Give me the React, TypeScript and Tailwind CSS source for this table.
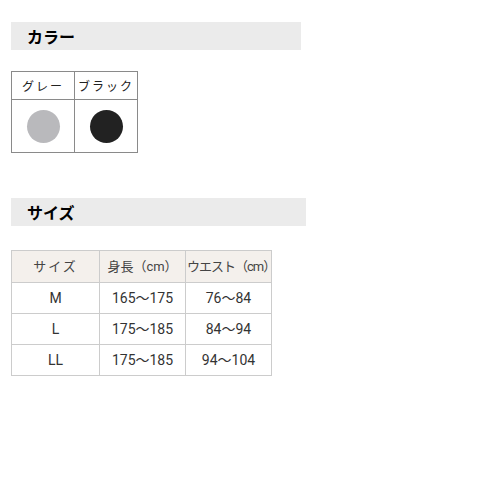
import React from 'react';

const font = { fontFamily: '"Noto Sans CJK JP", "Noto Sans", sans-serif' };

const sizes = [
  { size: 'M', height: '165〜175', waist: '76〜84' },
  { size: 'L', height: '175〜185', waist: '84〜94' },
  { size: 'LL', height: '175〜185', waist: '94〜104' },
];

const SectionTitle = ({ title, width }: { title: string; width: string }) => (
  <div className={`${width} h-[28px] bg-[#ebebeb] flex items-center pl-[16px]`}>
    <h2 className="text-[16px] font-bold text-black leading-none">{title}</h2>
  </div>
);

export default function App() {
  return (
    <div className="w-[500px] h-[500px] bg-white pl-[11px] pt-[22px]" style={font}>
      <SectionTitle title="カラー" width="w-[290px]" />

      {/* colour swatches */}
      <table className="mt-[21px] border-collapse text-[12px] text-[#222]">
        <tbody>
          <tr className="h-[28px]">
            <td className="w-[63px] border border-[#8a8a8a] text-center tracking-[2px]">グレー</td>
            <td className="w-[63px] border border-[#8a8a8a] text-center tracking-[2px]">ブラック</td>
          </tr>
          <tr className="h-[53px]">
            <td className="border border-[#8a8a8a]">
              <div className="mx-auto w-[33px] h-[33px] rounded-full bg-[#b9b9bc]" />
            </td>
            <td className="border border-[#8a8a8a]">
              <div className="mx-auto w-[33px] h-[33px] rounded-full bg-[#222222]" />
            </td>
          </tr>
        </tbody>
      </table>

      <div className="mt-[45px]">
        <SectionTitle title="サイズ" width="w-[295px]" />
      </div>

      {/* size chart */}
      <table
        className="mt-[24px] w-[261px] table-fixed border-collapse text-[14px] text-[#333] leading-none"
        style={{ fontFamily: 'Roboto, "Noto Sans CJK JP", sans-serif' }}
      >
        <thead>
          <tr className="h-[32px] bg-[#f4f0ec] text-[#444] text-[13px]">
            <th className="w-[88px] border border-[#cccccc] font-normal tracking-[2px]">サイズ</th>
            <th className="w-[86px] border border-[#cccccc] font-normal whitespace-nowrap">身長（cm）</th>
            <th className="w-[86px] border border-[#cccccc] font-normal whitespace-nowrap text-left pl-[1px] tracking-[-1px]">
              ウエスト（cm）
            </th>
          </tr>
        </thead>
        <tbody>
          {sizes.map((s) => (
            <tr key={s.size} className="h-[31px]">
              <td className="border border-[#cccccc] text-center">{s.size}</td>
              <td className="border border-[#cccccc] text-center">{s.height}</td>
              <td className="border border-[#cccccc] text-center">{s.waist}</td>
            </tr>
          ))}
        </tbody>
      </table>
    </div>
  );
}
